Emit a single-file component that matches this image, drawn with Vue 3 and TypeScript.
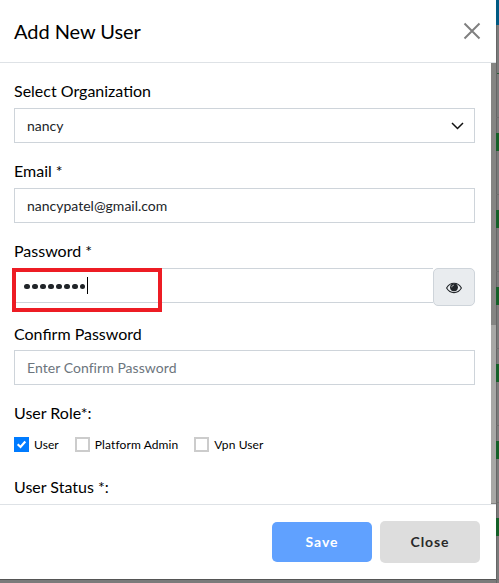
<script setup lang="ts">
import { ref } from 'vue'

interface Role {
  name: string
  checked: boolean
}

const organization = ref('nancy')
const email = ref('nancypatel@gmail.com')
const passwordLength = 8
const roles = ref<Role[]>([
  { name: 'User', checked: true },
  { name: 'Platform Admin', checked: false },
  { name: 'Vpn User', checked: false },
])
const rows = [1, 2, 3, 4, 5, 6]
</script>

<template>
  <div class="page">
    <section class="modal">
      <header class="head">
        <h1 class="title">Add New User</h1>
        <svg class="close-icon" viewBox="0 0 18 18"><path d="M1.5 1.5 16.5 16.5M16.5 1.5 1.5 16.5" /></svg>
      </header>
      <div class="body">
        <form class="form">
          <div class="field">
            <label class="label">Select Organization</label>
            <div class="input">
              <span>{{ organization }}</span>
              <svg class="chevron" viewBox="0 0 13 8"><path d="M1 1 6.500 6.500 12 1" /></svg>
            </div>
          </div>
          <div class="field">
            <label class="label">Email *</label>
            <div class="input"><span>{{ email }}</span></div>
          </div>
          <div class="field password">
            <label class="label">Password *</label>
            <div class="group">
              <div class="input secret">
                <i v-for="n in passwordLength" :key="n" class="dot"></i>
                <i class="caret"></i>
              </div>
              <div class="reveal">
                <svg class="eye" viewBox="0 0 16 12">
                  <path class="lid" d="M.6 6C2.400 2.900 5 1.300 8 1.300s5.600 1.600 7.400 4.700C13.600 9.100 11 10.600 8 10.600S2.400 9.100.6 6Z" />
                  <circle cx="8" cy="5.300" r="3.900" />
                  <path class="glint" d="M5.800 5.300C5.800 4 6.700 3.200 7.900 3.200" />
                </svg>
              </div>
              <div class="highlight"></div>
            </div>
          </div>
          <div class="field confirm">
            <label class="label">Confirm Password</label>
            <div class="input placeholder"><span>Enter Confirm Password</span></div>
          </div>
          <div class="label role-label">User Role*:</div>
          <div class="roles">
            <label v-for="role in roles" :key="role.name" class="role">
              <span class="box" :class="{ on: role.checked }">
                <svg v-if="role.checked" viewBox="0 0 15 15"><path d="M3.700 7.300 6.500 10 11.300 4.600" /></svg>
              </span>
              <span>{{ role.name }}</span>
            </label>
          </div>
          <div class="label">User Status *:</div>
        </form>
        <div class="scroll"><div class="thumb"></div></div>
      </div>
      <footer class="foot">
        <button class="btn save">Save</button>
        <button class="btn close">Close</button>
      </footer>
    </section>
    <aside class="backdrop">
      <div class="topbar"></div>
      <div class="tablehead"></div>
      <div class="row first"></div>
      <div v-for="row in rows" :key="row" class="row"><div class="tag"></div></div>
    </aside>
  </div>
</template>

<style>
body { margin: 0; background: #7b7b7b; }
</style>

<style scoped>
* { box-sizing: border-box; }
.page { display: flex; width: 499px; height: 583px; overflow: hidden; background: #7b7b7b; font-family: Lato, "Liberation Sans", sans-serif; color: #000; }
.modal { width: 496px; height: 580px; display: flex; flex-direction: column; background: #fff; border-bottom: 1px solid #555; }
.head { height: 63px; flex: none; border-bottom: 1px solid #dee2e6; display: flex; justify-content: space-between; align-items: center; padding: 0 15px 0 14px; }
.title { margin: 0; font-size: 20px; line-height: 24px; font-weight: 400; letter-spacing: -.05px; }
.close-icon { width: 18px; height: 18px; fill: none; stroke: #808080; stroke-width: 2; }
.body { height: 441px; flex: none; display: flex; overflow: hidden; }
.form { width: 491px; padding: 17px 16px 0 14px; }
.field { height: 80px; }
.password { height: 83px; }
.confirm { height: 79px; }
.label { display: block; height: 28px; font-size: 16px; line-height: 21px; white-space: nowrap; }
.confirm .label { height: 27px; }
.input { height: 35px; border: 1px solid #ced4da; display: flex; align-items: center; justify-content: space-between; padding: 0 10px 0 12px; font-size: 14px; color: #212529; }
.chevron { width: 13px; height: 8px; fill: none; stroke: #111; stroke-width: 1.5; }
.group { display: flex; position: relative; }
.secret { width: 419px; border-right: 0; justify-content: flex-start; padding: 2px 0 0 9px; }
.dot { width: 5.6px; height: 5.6px; margin-right: 2.4px; border-radius: 50%; background: #212529; }
.caret { width: 1px; height: 17px; margin: -2px 0 0 -1px; background: #000; }
.reveal { width: 42px; height: 38px; border: 1px solid #ced4da; border-radius: 5px; background: #e9ecef; display: flex; align-items: center; justify-content: center; }
.eye { width: 16px; height: 12px; margin-top: 1px; fill: #212529; }
.lid { fill: none; stroke: #212529; stroke-width: 1.1; }
.glint { fill: none; stroke: #e9ecef; stroke-width: .7; }
.highlight { position: absolute; left: -2px; top: 0; width: 150px; height: 44px; border: 4px solid #ed1c24; }
.placeholder { color: #6c757d; letter-spacing: .05px; }
.role-label { height: 35px; }
.roles { display: flex; height: 39px; gap: 16px; align-items: flex-start; font-size: 12px; line-height: 16px; }
.role { display: flex; gap: 5px; white-space: nowrap; letter-spacing: .1px; }
.box { width: 15px; height: 15px; border: 2px solid #ccc; }
.box.on { border: 0; background: #007bff; }
.box svg { display: block; width: 15px; height: 15px; fill: none; stroke: #fff; stroke-width: 2.2; }
.scroll { width: 5px; background: #a8a8a6; border-bottom: 1px solid #858583; }
.thumb { height: 262px; background: #858583; }
.foot { flex: 1; border-top: 1px solid #dee2e6; display: flex; justify-content: flex-end; align-items: center; gap: 8px; padding: 0 16px 0 0; }
.btn { width: 100px; height: 40px; padding: 0 0 2px; border: 0; border-radius: 5px; font: 700 14px Lato, sans-serif; letter-spacing: .9px; }
.save { background: #60a1ff; color: #fff; }
.close { height: 42px; background: #ddd; color: #292929; }
.backdrop { width: 3px; border-left: 1px solid #666; }
.topbar { height: 25px; background: #005a83; margin-left: -1px; }
.tablehead { height: 49px; border-bottom: 1px solid #285c35; }
.row { height: 77px; margin-left: -1px; border-bottom: 1px solid #6d6d6d; display: flex; align-items: flex-start; }
.first { height: 44px; }
.tag { width: 3px; height: 18px; margin-top: 15px; background: #146028; }
</style>
